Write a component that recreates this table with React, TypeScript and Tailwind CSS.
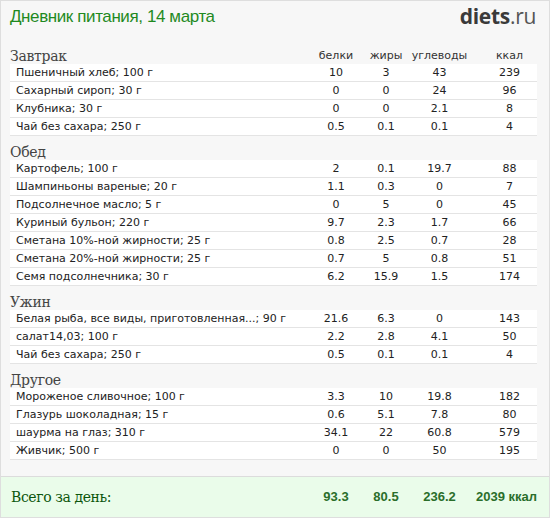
import React from 'react';

type Item = { name: string; p: string; f: string; c: string; k: string };
type Meal = { title: string; items: Item[] };

const meals: Meal[] = [
  {
    title: 'Завтрак',
    items: [
      { name: 'Пшеничный хлеб; 100 г', p: '10', f: '3', c: '43', k: '239' },
      { name: 'Сахарный сироп; 30 г', p: '0', f: '0', c: '24', k: '96' },
      { name: 'Клубника; 30 г', p: '0', f: '0', c: '2.1', k: '8' },
      { name: 'Чай без сахара; 250 г', p: '0.5', f: '0.1', c: '0.1', k: '4' },
    ],
  },
  {
    title: 'Обед',
    items: [
      { name: 'Картофель; 100 г', p: '2', f: '0.1', c: '19.7', k: '88' },
      { name: 'Шампиньоны вареные; 20 г', p: '1.1', f: '0.3', c: '0', k: '7' },
      { name: 'Подсолнечное масло; 5 г', p: '0', f: '5', c: '0', k: '45' },
      { name: 'Куриный бульон; 220 г', p: '9.7', f: '2.3', c: '1.7', k: '66' },
      { name: 'Сметана 10%-ной жирности; 25 г', p: '0.8', f: '2.5', c: '0.7', k: '28' },
      { name: 'Сметана 20%-ной жирности; 25 г', p: '0.7', f: '5', c: '0.8', k: '51' },
      { name: 'Семя подсолнечника; 30 г', p: '6.2', f: '15.9', c: '1.5', k: '174' },
    ],
  },
  {
    title: 'Ужин',
    items: [
      { name: 'Белая рыба, все виды, приготовленная...; 90 г', p: '21.6', f: '6.3', c: '0', k: '143' },
      { name: 'салат14,03; 100 г', p: '2.2', f: '2.8', c: '4.1', k: '50' },
      { name: 'Чай без сахара; 250 г', p: '0.5', f: '0.1', c: '0.1', k: '4' },
    ],
  },
  {
    title: 'Другое',
    items: [
      { name: 'Мороженое сливочное; 100 г', p: '3.3', f: '10', c: '19.8', k: '182' },
      { name: 'Глазурь шоколадная; 15 г', p: '0.6', f: '5.1', c: '7.8', k: '80' },
      { name: 'шаурма на глаз; 310 г', p: '34.1', f: '22', c: '60.8', k: '579' },
      { name: 'Живчик; 500 г', p: '0', f: '0', c: '50', k: '195' },
    ],
  },
];

const cols = 'grid grid-cols-[1fr_50px_50px_57px_69px]';

export default function App() {
  return (
    <div className="w-[550px] h-[518px] bg-[#f7f7f7] border border-[#dedede] flex flex-col overflow-hidden font-['DejaVu_Sans',sans-serif]">
      {/* шапка */}
      <div className="h-[39px] flex items-start justify-between pl-[9px] pr-[13px] pt-[4px]">
        <h1 className="text-[17px] leading-[24px] tracking-[-0.4px] text-[#1f8a1f] font-['Liberation_Sans',sans-serif]">
          Дневник питания, 14 марта
        </h1>
        <div className="text-[21px] leading-[22px] text-[#3a3a3a] font-['Open_Sans',sans-serif] tracking-[-0.3px]">
          <span className="font-bold">diets</span>
          <span className="text-[#555]">.ru</span>
        </div>
      </div>

      <div className="pl-[9px] pr-[12px]">
        {meals.map((meal, i) => (
          <div key={meal.title}>
            <div className={`${cols} h-[24px] pt-[7px] leading-[18px]`}>
              <div className="text-[14px] tracking-[-0.3px] text-[#444] font-['DejaVu_Serif',serif]">{meal.title}</div>
              {i === 0 && (
                <>
                  <div className="text-center text-[11px] text-[#333]">белки</div>
                  <div className="text-center text-[11px] text-[#333]">жиры</div>
                  <div className="text-center text-[11px] text-[#333]">углеводы</div>
                  <div className="text-center text-[11px] text-[#333] pl-[14px]">ккал</div>
                </>
              )}
            </div>
            {meal.items.map((it, j) => (
              <div
                key={j}
                className={`${cols} h-[18px] bg-white border-b border-[#e4e4e4] text-[11px] leading-[17px] text-[#222]`}
              >
                <div className="pl-[6px] whitespace-nowrap overflow-hidden">{it.name}</div>
                <div className="text-center">{it.p}</div>
                <div className="text-center">{it.f}</div>
                <div className="text-center">{it.c}</div>
                <div className="text-center pl-[14px]">{it.k}</div>
              </div>
            ))}
          </div>
        ))}
      </div>

      {/* итого */}
      <div className={`mt-auto h-[41px] border-t border-[#dcdcdc] bg-[#eafcea] pl-[9px] pr-[12px] ${cols} items-center`}>
        <div className="text-[14px] tracking-[-0.4px] text-[#0d560d] font-['DejaVu_Serif',serif] pl-[1px]">Всего за день:</div>
        <div className="text-center text-[13px] font-bold text-[#2a6e2a] font-['Liberation_Sans',sans-serif]">93.3</div>
        <div className="text-center text-[13px] font-bold text-[#2a6e2a] font-['Liberation_Sans',sans-serif]">80.5</div>
        <div className="text-center text-[13px] font-bold text-[#2a6e2a] font-['Liberation_Sans',sans-serif]">236.2</div>
        <div className="text-center text-[13px] font-bold text-[#2a6e2a] font-['Liberation_Sans',sans-serif] pl-[8px] whitespace-nowrap">2039 ккал</div>
      </div>
    </div>
  );
}
